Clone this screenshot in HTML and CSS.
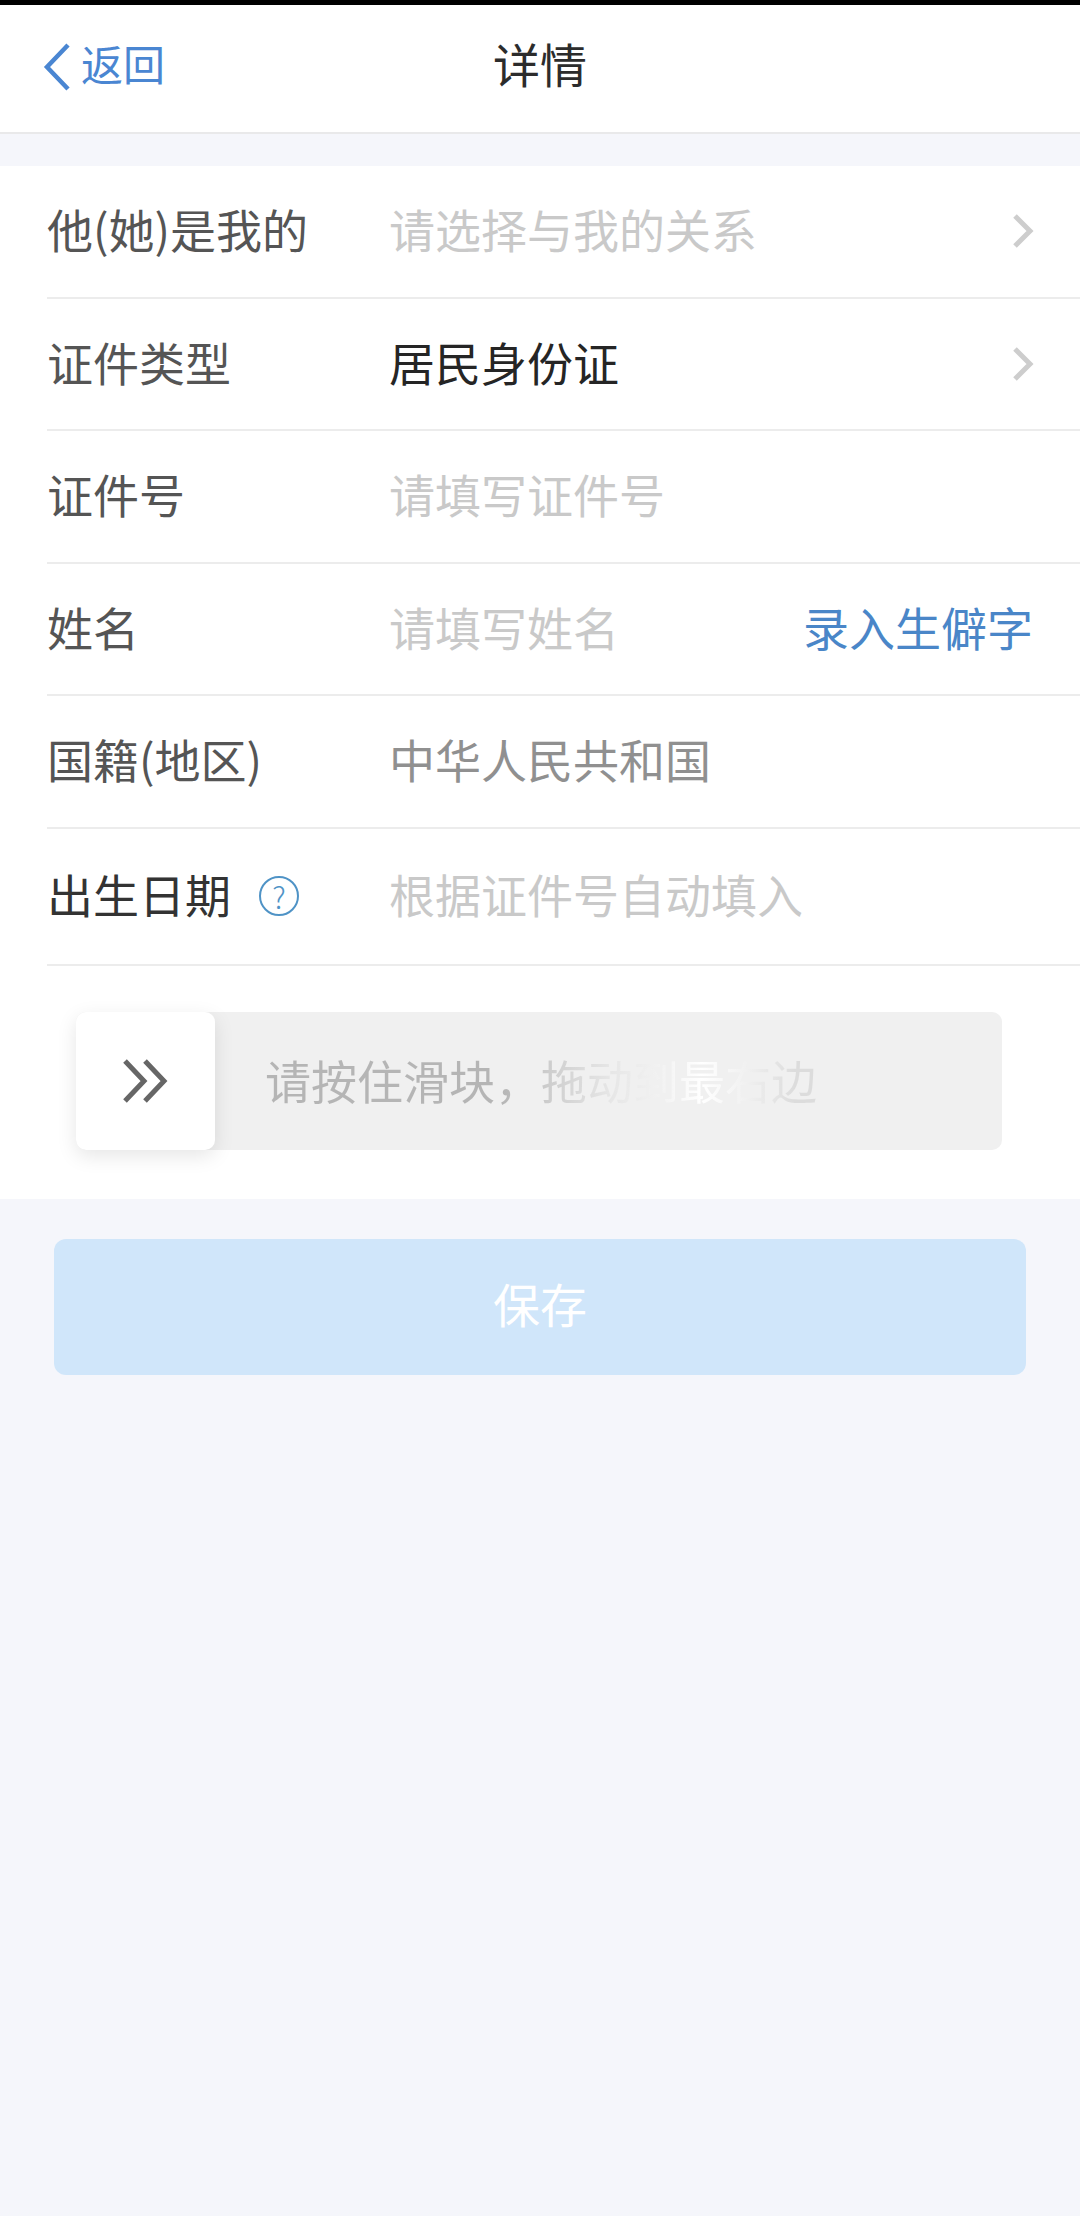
FILE: index.html

```html
<!DOCTYPE html>
<html lang="zh-CN">
<head>
    <meta charset="UTF-8">
    <title>详情</title>
    <link rel="stylesheet" href="styles.css">
</head>

<body>
<div class="status-strip"></div>
<div class="header">
    <div class="header__back">
        <svg class="back-icon" width="28" height="48" viewBox="0 0 28 48">
            <path d="M25 2 L4 24 L25 46" fill="none" stroke="#4a86d2" stroke-width="4.5"/>
        </svg>
        <span class="header__back-text">返回</span>
    </div>
    <div class="header__title">详情</div>
</div>

<div class="form">
    <div class="row row--first">
        <div class="row__label">他(她)是我的</div>
        <div class="row__value is-placeholder">请选择与我的关系</div>
        <svg class="chevron" width="24" height="36" viewBox="0 0 24 36">
            <path d="M4 3 L19 18 L4 33" fill="none" stroke="#cdcdcd" stroke-width="5"/>
        </svg>
    </div>
    <div class="row">
        <div class="row__label">证件类型</div>
        <div class="row__value is-filled">居民身份证</div>
        <svg class="chevron" width="24" height="36" viewBox="0 0 24 36">
            <path d="M4 3 L19 18 L4 33" fill="none" stroke="#cdcdcd" stroke-width="5"/>
        </svg>
    </div>
    <div class="row">
        <div class="row__label">证件号</div>
        <div class="row__value is-placeholder">请填写证件号</div>
    </div>
    <div class="row">
        <div class="row__label">姓名</div>
        <div class="row__value is-placeholder">请填写姓名</div>
        <div class="row__link">录入生僻字</div>
    </div>
    <div class="row">
        <div class="row__label">国籍(地区)</div>
        <div class="row__value is-muted">中华人民共和国</div>
    </div>
    <div class="row row--last">
        <div class="row__label row__label--dark">
            出生日期
            <span class="help">?</span>
        </div>
        <div class="row__value is-placeholder">根据证件号自动填入</div>
    </div>

    <div class="slider">
        <div class="slider__handle">
            <svg width="48" height="46" viewBox="0 0 48 46">
                <path d="M3 3 L22 23 L3 43 M23 3 L42 23 L23 43" fill="none" stroke="#666" stroke-width="5"/>
            </svg>
        </div>
        <div class="slider__text">请按住滑块，拖动到最右边</div>
    </div>
</div>

<div class="save-btn">保存</div>
</body>
</html>
```

FILE: styles.css

```css
*{
    box-sizing: border-box;
    margin:0;
    padding:0;
}
body{
    width:1080px;
    min-height:2216px;
    background-color:#f5f6fb;
    font-family:"Noto Sans CJK SC","Liberation Sans",sans-serif;
    font-size:46px;
}
.status-strip{
    height:5px;
    background-color:#000;
}
.header{
    height:129px;
    background-color:#fff;
    border-bottom:2px solid #e9e9ea;
    display:flex;
    align-items:center;
    justify-content:center;
    position:relative;
}
.header__title{
    font-size:47px;
    color:#2c2c2c;
    line-height:60px;
    padding-bottom:11px;
}
.header__back{
    position:absolute;
    left:43px;
    top:34px;
    display:flex;
    align-items:center;
    gap:10px;
    font-size:42px;
    line-height:48px;
    color:#4a86d2;
}
.header__back-text{
    padding-bottom:8px;
}
.form{
    margin-top:32px;
    height:1033px;
    background-color:#fff;
    padding-left:47px;
}
.row{
    height:132.5px;
    display:flex;
    align-items:center;
    border-bottom:2px solid #ececec;
    padding-right:44px;
}
.row--last{
    height:137px;
}
.row__label{
    width:342px;
    color:#555;
    line-height:60px;
    padding-bottom:6px;
    display:flex;
    align-items:center;
}
.row__label--dark{
    color:#333;
}
.row__value{
    flex:1;
    line-height:60px;
    padding-bottom:6px;
}
.is-placeholder{
    color:#c9c9c9;
}
.is-filled{
    color:#252525;
}
.is-muted{
    color:#909090;
}
.row__link{
    color:#4a86c8;
    line-height:60px;
    padding-bottom:6px;
    margin-right:3px;
}
.chevron{
    margin-right:1px;
}
.help{
    width:40px;
    height:40px;
    margin:6px 0 0 28px;
    border:2px solid #4f93c6;
    border-radius:50%;
    color:#4f93c6;
    font-size:30px;
    font-weight:300;
    line-height:36px;
    text-align:center;
}
.slider{
    width:926px;
    height:138px;
    margin:46px 0 0 29px;
    background-color:#f0f0f0;
    border-radius:10px;
    display:flex;
    align-items:center;
}
.slider__handle{
    width:139px;
    height:138px;
    flex:none;
    background-color:#fff;
    border-radius:10px;
    box-shadow:0 6px 20px rgba(0,0,0,0.10);
    display:flex;
    align-items:center;
    justify-content:center;
}
.slider__text{
    margin-left:50px;
    line-height:60px;
    padding-bottom:4px;
    color:transparent;
    background-image:linear-gradient(90deg,#b5b5b5 0,#b5b5b5 235px,#d0d0d0 290px,#e6e6e6 345px,#f2f2f2 395px,#ffffff 437px,#f1f1f1 480px,#dcdcdc 530px);
    -webkit-background-clip:text;
    background-clip:text;
}
.save-btn{
    width:972px;
    height:136px;
    margin:40px 0 0 54px;
    background-color:#d0e6fa;
    border-radius:12px;
    color:#fff;
    font-size:47px;
    line-height:128px;
    text-align:center;
}
```
